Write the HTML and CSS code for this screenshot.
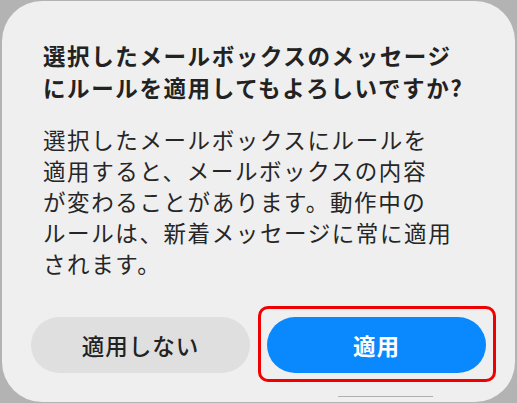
FILE: index.html
```html
<!DOCTYPE html>
<html lang="ja">
<head>
<meta charset="UTF-8">
<meta name="viewport" content="width=device-width, initial-scale=1.0">
<title>ルールを適用</title>
<link rel="stylesheet" href="styles.css">
</head>
<body>
<!-- 確認ダイアログ -->
<div class="dialog">
 <h1 class="dialog-title">選択したメールボックスのメッセージ<br>にルールを適用してもよろしいですか?</h1>
 <p class="dialog-text">選択したメールボックスにルールを<br>適用すると、メールボックスの内容<br>が変わることがあります。動作中の<br>ルールは、新着メッセージに常に適用<br>されます。</p>
 <div class="dialog-buttons">
 <button class="btn btn-cancel">適用しない</button>
 <button class="btn btn-apply">適用</button>
 </div>
 <div class="grabber"></div>
</div>
</body>
</html>
```

FILE: styles.css
```css
 html, body {
 margin: 0;
 height: 100%;
 }
 body {
 background-color: #b3b3b3;
 font-family: "Noto Sans CJK JP", "Noto Sans", sans-serif;
 padding: 1px 2px 1px 2px;
 box-sizing: border-box;
 }
 .dialog {
 position: relative;
 height: 401px;
 box-sizing: border-box;
 background-color: #efefef;
 border-radius: 40px;
 padding: 38px 29px 29px 29px;
 display: flex;
 flex-direction: column;
 }
 .dialog-title {
 margin: 0 0 0 12px;
 font-size: 22.5px;
 font-weight: 700;
 line-height: 32px;
 letter-spacing: 1.6px;
 color: #222;
 white-space: nowrap;
 }
 .dialog-text {
 margin: 21px 0 0 12px;
 font-size: 22.5px;
 font-weight: 400;
 line-height: 31px;
 letter-spacing: 1.6px;
 color: #262626;
 white-space: nowrap;
 }
 .dialog-buttons {
 margin-top: auto;
 display: flex;
 gap: 17px;
 }
 .btn {
 flex: 1;
 height: 56px;
 border: none;
 border-radius: 28px;
 font-family: inherit;
 font-size: 22.5px;
 letter-spacing: 1px;
 cursor: pointer;
 }
 .btn-cancel {
 background-color: #dfdfdf;
 color: #222;
 font-weight: 500;
 }
 .btn-apply {
 position: relative;
 background-color: #0a89ff;
 color: #fff;
 font-weight: 700;
 }
 /* 赤い強調枠 */
 .btn-apply::after {
 content: "";
 position: absolute;
 top: -11px;
 left: -9px;
 right: -10px;
 bottom: -9px;
 border: 3px solid #f00000;
 border-radius: 10px;
 }
 .grabber {
 position: absolute;
 left: 336px;
 bottom: 5px;
 width: 95px;
 height: 1px;
 background-color: #b0b0b0;
 }
```
